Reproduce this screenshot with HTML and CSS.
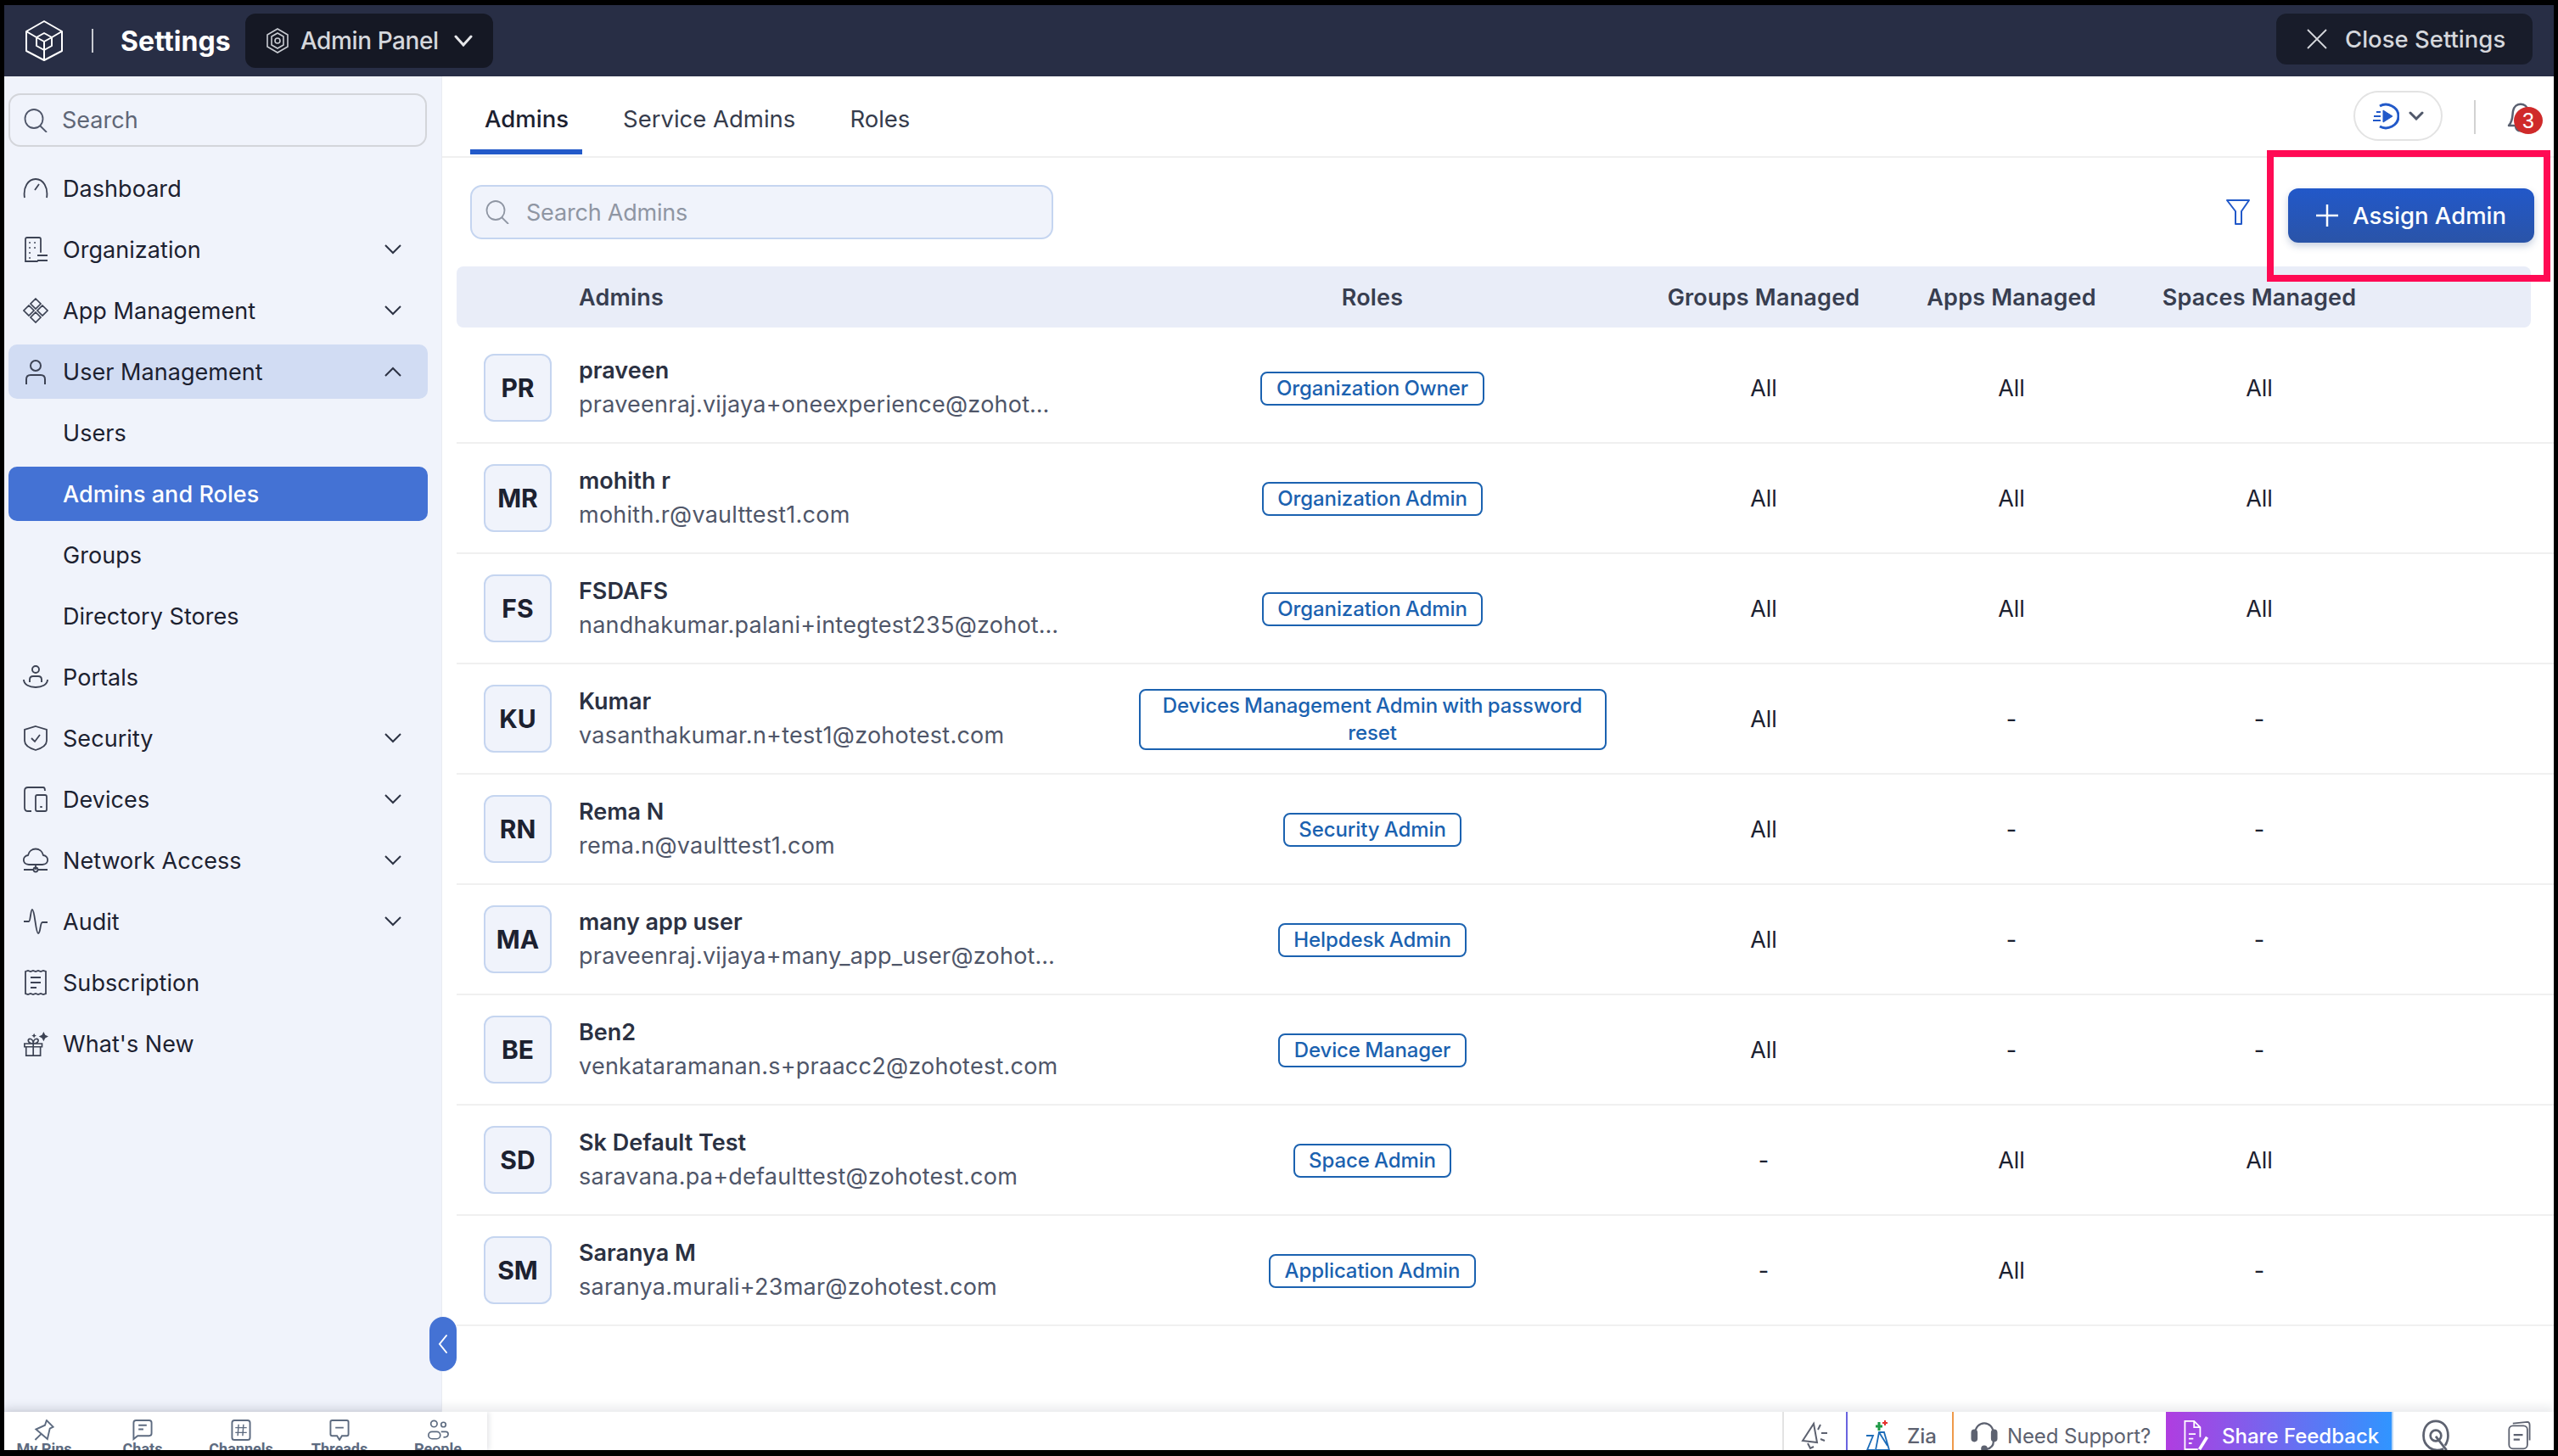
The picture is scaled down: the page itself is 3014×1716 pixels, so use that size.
FILE: index.html
```html
<!DOCTYPE html>
<html lang="en">
<head>
<meta charset="utf-8">
<title>Settings - Admins</title>
<link rel="stylesheet" href="styles.css">
</head>
<body>
<div class="app">
  <header class="topbar">
    <svg class="logo" viewBox="0 0 44 48" fill="none" stroke="#fff" stroke-width="2" stroke-linejoin="round"><path d="M22 1 43 13V36L22 47 1 36V13Z"/><path d="M22 15 31 20V30L22 35 13 30V20ZM13 20 22 25 31 20M22 25V47M1 13 13 20M43 13 31 20"/></svg>
    <span class="topbar-sep"></span>
    <span class="topbar-title">Settings</span>
    <div class="panel-btn">
      <svg class="panel-icon" viewBox="0 0 26 30" fill="none" stroke="#c9ccd3" stroke-width="1.6"><path d="M13 1 25 8V22L13 29 1 22V8Z"/><path d="M13 6 20 10V20L13 24 6 20V10Z"/><circle cx="13" cy="15" r="3"/></svg>
      <span>Admin Panel</span>
      <svg class="panel-chev" viewBox="0 0 22 14" fill="none" stroke="#e6e7ea" stroke-width="3" stroke-linecap="round"><path d="M2 2 11 12 20 2"/></svg>
    </div>
    <div class="close-btn">
      <svg class="close-icon" viewBox="0 0 24 24" fill="none" stroke="#d5d7dc" stroke-width="1.8"><path d="M1 1 23 23M23 1 1 23"/></svg>
      <span>Close Settings</span>
    </div>
  </header>

  <div class="middle">
    <aside class="sidebar">
      <div class="side-search">
        <svg class="search-icon" viewBox="0 0 28 28" fill="none" stroke="#4f5669" stroke-width="1.8"><ellipse cx="12" cy="12" rx="10.5" ry="11"/><path d="M19 20 27 28"/></svg>
        <span>Search</span>
      </div>
      <nav class="nav">
        <div class="nav-item">
          <svg class="nav-icon" viewBox="0 0 30 30" fill="none" stroke="#3d4354" stroke-width="1.8"><path d="M2 26C0 14 6 4 15 4s15 10 13 22M19 10 14 17"/></svg>
          <span class="nav-label">Dashboard</span>
        </div>
        <div class="nav-item">
          <svg class="nav-icon" viewBox="0 0 30 30" fill="none" stroke="#3d4354" stroke-width="1.8"><path d="M17 29H3V3Q3 1 5 1H19Q21 1 21 3V18M8 7h.1M14 7h.1M8 13h.1M14 13h.1M8 19h.1M8 25h.1" stroke-linecap="round"/><path d="M17 22H29M17 28H29" /></svg>
          <span class="nav-label">Organization</span>
          <svg class="nav-chev" viewBox="0 0 20 12" fill="none" stroke="#2d3344" stroke-width="2"><path d="M1 1 10 10 19 1"/></svg>
        </div>
        <div class="nav-item">
          <svg class="nav-icon" viewBox="0 0 30 30" fill="none" stroke="#3d4354" stroke-width="1.7"><path d="M15 1 21 7 15 13 9 7ZM15 17 21 23 15 29 9 23ZM7 9 13 15 7 21 1 15ZM23 9 29 15 23 21 17 15Z"/></svg>
          <span class="nav-label">App Management</span>
          <svg class="nav-chev" viewBox="0 0 20 12" fill="none" stroke="#2d3344" stroke-width="2"><path d="M1 1 10 10 19 1"/></svg>
        </div>
        <div class="nav-item nav-open">
          <svg class="nav-icon" viewBox="0 0 30 30" fill="none" stroke="#3d4354" stroke-width="2"><circle cx="15" cy="8" r="6"/><path d="M4 30V24Q4 19 9 19H21Q26 19 26 24V30"/></svg>
          <span class="nav-label">User Management</span>
          <svg class="nav-chev" viewBox="0 0 20 12" fill="none" stroke="#2d3344" stroke-width="2"><path d="M1 11 10 2 19 11"/></svg>
        </div>
        <div class="nav-item"><span class="nav-label nav-sub">Users</span></div>
        <div class="nav-item nav-active"><span class="nav-label nav-sub">Admins and Roles</span></div>
        <div class="nav-item"><span class="nav-label nav-sub">Groups</span></div>
        <div class="nav-item"><span class="nav-label nav-sub">Directory Stores</span></div>
        <div class="nav-item">
          <svg class="nav-icon" viewBox="0 0 30 30" fill="none" stroke="#3d4354" stroke-width="1.9"><circle cx="15" cy="6" r="4"/><path d="M8 21V18Q8 14 12 14H18Q22 14 22 18V21M1 18C1 30 29 30 29 18"/></svg>
          <span class="nav-label">Portals</span>
        </div>
        <div class="nav-item">
          <svg class="nav-icon" viewBox="0 0 30 30" fill="none" stroke="#3d4354" stroke-width="1.8"><path d="M15 1 28 5V18Q28 25 15 29 2 25 2 18V5Z"/><path d="M10 15 14 19 20 11"/></svg>
          <span class="nav-label">Security</span>
          <svg class="nav-chev" viewBox="0 0 20 12" fill="none" stroke="#2d3344" stroke-width="2"><path d="M1 1 10 10 19 1"/></svg>
        </div>
        <div class="nav-item">
          <svg class="nav-icon" viewBox="0 0 30 30" fill="none" stroke="#3d4354" stroke-width="1.8"><path d="M10 29H6Q2 29 2 25V5Q2 1 6 1H24Q26 1 26 5"/><rect x="15" y="10" width="13" height="19" rx="2"/><path d="M21 24h1" stroke-linecap="round"/></svg>
          <span class="nav-label">Devices</span>
          <svg class="nav-chev" viewBox="0 0 20 12" fill="none" stroke="#2d3344" stroke-width="2"><path d="M1 1 10 10 19 1"/></svg>
        </div>
        <div class="nav-item">
          <svg class="nav-icon" viewBox="0 0 30 30" fill="none" stroke="#3d4354" stroke-width="1.8"><path d="M8 20H7C-1 20-1 10 6 9 8-1 22-1 24 9 31 10 31 20 23 20Z"/><path d="M15 20V26M1 26H12M18 26H29"/><circle cx="15" cy="26" r="2.5"/></svg>
          <span class="nav-label">Network Access</span>
          <svg class="nav-chev" viewBox="0 0 20 12" fill="none" stroke="#2d3344" stroke-width="2"><path d="M1 1 10 10 19 1"/></svg>
        </div>
        <div class="nav-item">
          <svg class="nav-icon" viewBox="0 0 30 30" fill="none" stroke="#3d4354" stroke-width="1.8"><path d="M1 15H7C9 15 9 1 11 1 14 1 15 29 18 29 21 29 20 16 23 16H29"/></svg>
          <span class="nav-label">Audit</span>
          <svg class="nav-chev" viewBox="0 0 20 12" fill="none" stroke="#2d3344" stroke-width="2"><path d="M1 1 10 10 19 1"/></svg>
        </div>
        <div class="nav-item">
          <svg class="nav-icon" viewBox="0 0 30 30" fill="none" stroke="#3d4354" stroke-width="1.8"><path d="M3 2 6 1 9 2 12 1 15 2 18 1 21 2 24 1 27 2V28L24 29 21 28 18 29 15 28 12 29 9 28 6 29 3 28ZM9 9H21M9 15H21M9 21H16"/></svg>
          <span class="nav-label">Subscription</span>
        </div>
        <div class="nav-item">
          <svg class="nav-icon" viewBox="0 0 32 32" fill="none" stroke="#3d4354" stroke-width="1.8"><path d="M2 16H24V20H2ZM4 20V31H22V20M13 16V31M13 16C6 16 5 10 9 10 12 10 13 14 13 16 13 14 14 10 17 10 21 10 20 16 13 16Z"/><path d="M26 1 28 5 32 7 28 9 26 13 24 9 20 7 24 5Z" fill="#3d4354" stroke="none"/><path d="M14 3 15 5 17 6 15 7 14 9 13 7 11 6 13 5Z" fill="#3d4354" stroke="none"/></svg>
          <span class="nav-label">What's New</span>
        </div>
      </nav>
    </aside>

    <main class="main">
      <button class="collapse" type="button" aria-label="Collapse">
        <svg viewBox="0 0 12 24" fill="none" stroke="#fff" stroke-width="2" stroke-linecap="round"><path d="M10 2 2 12 10 22"/></svg>
      </button>

      <div class="tabbar">
        <div class="tab tab-active">Admins</div>
        <div class="tab">Service Admins</div>
        <div class="tab">Roles</div>
        <div class="tabbar-tools">
          <div class="play-pill">
            <svg class="play-icon" viewBox="0 0 32 32" fill="none" stroke="#2259c9" stroke-width="3"><path d="M9 4C18-1 31 5 31 16S18 33 9 28"/><path d="M13 9 24 16 13 23Z" fill="#2259c9" stroke-width="1"/><path d="M5 11H10M2 16H10M1 21H10" stroke-width="2"/></svg>
            <svg class="play-chev" viewBox="0 0 18 11" fill="none" stroke="#50586a" stroke-width="3" stroke-linecap="round"><path d="M2 2 9 9 16 2"/></svg>
          </div>
          <span class="tools-sep"></span>
          <div class="bell">
            <svg class="bell-icon" viewBox="0 0 32 38" fill="none" stroke="#5a6070" stroke-width="2.5" stroke-linejoin="round"><path d="M2 29C7 24 6 18 7 12 9 1 23 1 25 12 26 18 25 24 30 29ZM10 30C11 37 21 37 22 30"/></svg>
            <span class="badge">3</span>
          </div>
        </div>
      </div>

      <div class="toolbar">
        <div class="admin-search">
          <svg class="search-icon search-muted" viewBox="0 0 28 28" fill="none" stroke="#8f96a3" stroke-width="1.8"><ellipse cx="12" cy="12" rx="10.5" ry="11"/><path d="M19 20 27 28"/></svg>
          <span>Search Admins</span>
        </div>
        <svg class="filter" viewBox="0 0 28 32" fill="none" stroke="#2259c9" stroke-width="2" stroke-linejoin="round"><path d="M1 2H27L18 15V30H11V15Z"/></svg>
        <div class="assign-wrap">
          <button class="assign" type="button">
            <svg class="plus" viewBox="0 0 26 26" fill="none" stroke="#fff" stroke-width="2.5"><path d="M13 0V26M0 13H26"/></svg>
            <span>Assign Admin</span>
          </button>
          <div class="highlight"></div>
        </div>
      </div>

      <div class="table-head">
        <div class="th th-admin">Admins</div>
        <div class="th">Roles</div>
        <div class="th">Groups Managed</div>
        <div class="th">Apps Managed</div>
        <div class="th">Spaces Managed</div>
      </div>

      <div class="rows">
        <div class="row">
          <div class="avatar">PR</div>
          <div class="who"><div class="name">praveen</div><div class="email">praveenraj.vijaya+oneexperience@zohotest.com</div></div>
          <div class="cell"><span class="tag">Organization Owner</span></div>
          <div class="cell">All</div><div class="cell">All</div><div class="cell">All</div>
        </div>
        <div class="row">
          <div class="avatar">MR</div>
          <div class="who"><div class="name">mohith r</div><div class="email">mohith.r@vaulttest1.com</div></div>
          <div class="cell"><span class="tag">Organization Admin</span></div>
          <div class="cell">All</div><div class="cell">All</div><div class="cell">All</div>
        </div>
        <div class="row">
          <div class="avatar">FS</div>
          <div class="who"><div class="name">FSDAFS</div><div class="email">nandhakumar.palani+integtest235@zohotest.com</div></div>
          <div class="cell"><span class="tag">Organization Admin</span></div>
          <div class="cell">All</div><div class="cell">All</div><div class="cell">All</div>
        </div>
        <div class="row">
          <div class="avatar">KU</div>
          <div class="who"><div class="name">Kumar</div><div class="email">vasanthakumar.n+test1@zohotest.com</div></div>
          <div class="cell"><span class="tag">Devices Management Admin with password reset</span></div>
          <div class="cell">All</div><div class="cell">-</div><div class="cell">-</div>
        </div>
        <div class="row">
          <div class="avatar">RN</div>
          <div class="who"><div class="name">Rema N</div><div class="email">rema.n@vaulttest1.com</div></div>
          <div class="cell"><span class="tag">Security Admin</span></div>
          <div class="cell">All</div><div class="cell">-</div><div class="cell">-</div>
        </div>
        <div class="row">
          <div class="avatar">MA</div>
          <div class="who"><div class="name">many app user</div><div class="email">praveenraj.vijaya+many_app_user@zohotest.com</div></div>
          <div class="cell"><span class="tag">Helpdesk Admin</span></div>
          <div class="cell">All</div><div class="cell">-</div><div class="cell">-</div>
        </div>
        <div class="row">
          <div class="avatar">BE</div>
          <div class="who"><div class="name">Ben2</div><div class="email">venkataramanan.s+praacc2@zohotest.com</div></div>
          <div class="cell"><span class="tag">Device Manager</span></div>
          <div class="cell">All</div><div class="cell">-</div><div class="cell">-</div>
        </div>
        <div class="row">
          <div class="avatar">SD</div>
          <div class="who"><div class="name">Sk Default Test</div><div class="email">saravana.pa+defaulttest@zohotest.com</div></div>
          <div class="cell"><span class="tag">Space Admin</span></div>
          <div class="cell">-</div><div class="cell">All</div><div class="cell">All</div>
        </div>
        <div class="row">
          <div class="avatar">SM</div>
          <div class="who"><div class="name">Saranya M</div><div class="email">saranya.murali+23mar@zohotest.com</div></div>
          <div class="cell"><span class="tag">Application Admin</span></div>
          <div class="cell">-</div><div class="cell">All</div><div class="cell">-</div>
        </div>
      </div>
    </main>
  </div>

  <footer class="bottombar">
    <div class="quick">
      <div class="quick-item">
        <svg class="quick-icon" viewBox="0 0 24 26" fill="none" stroke="#5d6b80" stroke-width="2"><path d="M15 1 23 9 19 11 16 24 2 12 13 7ZM8 18 1 25"/></svg>
        <span>My Pins</span>
      </div>
      <div class="quick-item">
        <svg class="quick-icon" viewBox="0 0 24 26" fill="none" stroke="#5d6b80" stroke-width="2"><path d="M1 24V4Q1 1 4 1H20Q23 1 23 4V17Q23 20 20 20H6ZM7 7H17M7 12H13"/></svg>
        <span>Chats</span>
      </div>
      <div class="quick-item">
        <svg class="quick-icon" viewBox="0 0 24 26" fill="none" stroke="#5d6b80" stroke-width="2"><rect x="1" y="1" width="22" height="24" rx="3"/><path d="M9 6 8 20M15 6 14 20M5 10H19M5 16H19" stroke-width="1.5"/></svg>
        <span>Channels</span>
      </div>
      <div class="quick-item">
        <svg class="quick-icon" viewBox="0 0 24 26" fill="none" stroke="#5d6b80" stroke-width="2"><path d="M3 1H21Q23 1 23 3V18Q23 20 21 20H15L12 25 9 20H3Q1 20 1 18V3Q1 1 3 1ZM7 10H17"/></svg>
        <span>Threads</span>
      </div>
      <div class="quick-item">
        <svg class="quick-icon" viewBox="0 0 28 26" fill="none" stroke="#5d6b80" stroke-width="1.8"><circle cx="9" cy="5" r="4"/><circle cx="21" cy="6" r="3"/><rect x="2" y="15" width="15" height="9" rx="4.5"/><path d="M18 15H24Q27 15 27 18 27 22 21 22"/></svg>
        <span>People</span>
      </div>
    </div>
    <div class="utils">
      <div class="util util-mega">
        <svg class="util-icon" viewBox="0 0 34 36" fill="none" stroke="#5d6270" stroke-width="2"><path d="M2 24 15 4 19 26ZM8 27 11 33 15 31M23 5 20 11M24 15H31M23 22 28 24"/></svg>
      </div>
      <div class="util util-zia">
        <svg class="util-icon" viewBox="0 0 30 36" fill="none" stroke="#1c6cb8" stroke-width="1.8"><path d="M1 18H9L2 35H11M16 14 12 35H28L22 14ZM16 14 26 30"/><path d="M16 2V12M12 7H20" stroke="#1f9a46" stroke-width="3"/><path d="M23 0V6M20 3H26" stroke="#e5322d" stroke-width="2"/></svg>
        <span class="util-text util-strong">Zia</span>
      </div>
      <div class="util util-help">
        <svg class="util-icon" viewBox="0 0 34 40" fill="none" stroke="#5d6270" stroke-width="2.5"><path d="M5 18C5-1 29-1 29 18V28Q29 36 19 38"/><rect x="1" y="13" width="6" height="14" rx="3" fill="#5d6270"/><rect x="27" y="13" width="6" height="14" rx="3" fill="#5d6270"/><circle cx="17" cy="37" r="3" fill="#5d6270"/></svg>
        <span class="util-text">Need Support?</span>
      </div>
      <div class="util-feedback">
        <svg class="util-icon" viewBox="0 0 34 40" fill="none" stroke="#fff" stroke-width="2"><path d="M20 38H3V1H15L23 9V22M15 1V9H23M8 18H17M8 24H14M8 30H12"/><path d="M22 38 32 22" stroke-width="4"/></svg>
        <span>Share Feedback</span>
      </div>
      <div class="util-end">
        <svg class="util-q" viewBox="0 0 36 42" fill="none" stroke="#5d6270" stroke-width="3"><path d="M28 38C14 44 2 34 2 21 2 9 9 2 18 2S34 9 34 21C34 27 32 31 30 34"/><circle cx="18" cy="21" r="7"/><path d="M18 22 32 40"/></svg>
        <svg class="util-notes" viewBox="0 0 30 40" fill="none" stroke="#5d6270" stroke-width="2"><path d="M7 4 26 2Q29 2 29 6V26"/><rect x="2" y="7" width="24" height="30" rx="5"/><path d="M8 19H20M8 25H16" stroke-width="2.5"/></svg>
      </div>
    </div>
  </footer>
</div>
</body>
</html>
```

FILE: styles.css
```css
* { box-sizing: border-box; }
html, body { margin: 0; height: 100%; }
body {
  background: #000;
  padding: 6px 5px 7px 5px;
  font-family: Inter, "Noto Sans", sans-serif;
  font-size: 27px;
  color: #1c2130;
  overflow: hidden;
}
.app { height: 100%; display: flex; flex-direction: column; background: #fff; overflow: hidden; }

/* top bar */
.topbar { flex: 0 0 84px; background: #282e45; display: flex; align-items: center; padding: 0 25px; position: relative; }
.logo { width: 44px; height: 48px; }
.topbar-sep { width: 2px; height: 28px; background: #c8cad1; margin-left: 34px; }
.topbar-title { margin-left: 32px; font-size: 32px; font-weight: 700; color: #fff; letter-spacing: .1px; }
.panel-btn { margin-left: 17px; width: 292px; height: 64px; margin-top: 10px; margin-bottom: 10px; background: #151824; border-radius: 12px; display: flex; align-items: center; padding-left: 25px; color: #d5d7dc; font-size: 28px; letter-spacing: -.4px; font-weight: 500; }
.panel-icon { width: 26px; height: 30px; margin-right: 14px; }
.panel-chev { width: 22px; height: 14px; margin-left: 18px; }
.close-btn { margin-left: auto; margin-top: 10px; margin-bottom: 14px; width: 302px; height: 60px; background: #181c2a; border-radius: 12px; display: flex; align-items: center; padding-left: 36px; color: #d5d7dc; font-size: 27.5px; font-weight: 500; }
.close-icon { width: 24px; height: 24px; margin-right: 21px; }

/* middle */
.middle { flex: 1; display: flex; min-height: 0; position: relative; }
.sidebar { flex: 0 0 516px; background: #f0f3fb; padding: 20px 0 0 5px; box-shadow: inset -1px 0 0 #e9ebf1, inset 0 -8px 8px -8px #d3d6df; }
.side-search { width: 493px; height: 63px; border: 2px solid #d3d5da; border-radius: 14px; display: flex; align-items: center; padding-left: 16px; color: #5f6676; }
.search-icon { width: 28px; height: 28px; margin-right: 17px; }
.nav { margin-top: 17px; display: flex; flex-direction: column; gap: 8px; }
.nav-item { width: 494px; height: 64px; border-radius: 10px; display: flex; align-items: center; padding-left: 17px; position: relative; }
.nav-icon { width: 30px; height: 30px; flex: none; margin-right: 17px; }
.nav-label { font-size: 27px; letter-spacing: .05px; }
.nav-sub { margin-left: 47px; }
.nav-chev { width: 20px; height: 12px; margin-left: auto; margin-right: 31px; }
.nav-open { background: #d1dcf3; }
.nav-active { background: #4472d4; color: #fff; font-weight: 500; }

/* main */
.main { flex: 1; min-width: 0; position: relative; }
.collapse { position: absolute; left: -15px; top: 1462px; width: 32px; height: 64px; border: 0; border-radius: 16px; background: #4472d4; padding: 0; display: flex; align-items: center; justify-content: center; z-index: 2; }
.collapse svg { width: 12px; height: 24px; }

.tabbar { height: 96px; border-bottom: 2px solid #f0f0f0; display: flex; padding-left: 33px; padding-right: 11px; }
.tab { height: 92px; padding: 8px 17px 0; margin-right: 30px; display: flex; align-items: center; font-size: 27.5px; color: #363c4c; }
.tab-active { color: #1c2130; font-weight: 500; border-bottom: 6px solid #2259c9; padding-top: 14px; padding-right: 16px; padding-left: 17px; margin-right: 31px; }
.tabbar-tools { margin-left: auto; display: flex; align-items: flex-start; }
.play-pill { margin-top: 17px; width: 105px; height: 59px; border: 2px solid #e3e3e3; border-radius: 30px; display: flex; align-items: center; padding-left: 20px; }
.play-icon { width: 32px; height: 32px; }
.play-chev { width: 18px; height: 11px; margin-left: 11px; }
.tools-sep { width: 2px; height: 40px; margin-top: 28px; margin-left: 37px; background: #d2d2d2; }
.bell { position: relative; margin-left: 37px; margin-top: 29px; width: 44px; height: 40px; }
.bell-icon { width: 32px; height: 38px; display: block; }
.badge { position: absolute; left: 8px; top: 7px; width: 34px; height: 32px; border-radius: 50%; background: #cf2a2a; color: #fff; font-size: 25px; line-height: 32px; text-align: center; font-family: "Liberation Sans", sans-serif; }

.toolbar { height: 128px; display: flex; align-items: flex-start; padding-left: 33px; padding-right: 23px; }
.admin-search { margin-top: 32px; width: 687px; height: 64px; border: 2px solid #c5d5f0; border-radius: 14px; background: #f0f3fb; display: flex; align-items: center; padding-left: 16px; color: #8f96a3; letter-spacing: -.2px; }
.search-muted { margin-right: 20px; }
.filter { width: 28px; height: 32px; margin-left: auto; margin-top: 48px; }
.assign-wrap { position: relative; margin-left: 45px; margin-top: 36px; }
.assign { width: 290px; height: 64px; border: 0; border-radius: 12px; background: linear-gradient(#2258c9, #2a54a8); box-shadow: 0 4px 8px rgba(40, 70, 130, .25); color: #fff; font: inherit; font-size: 27.5px; font-weight: 500; display: flex; align-items: center; padding: 0 0 0 33px; }
.plus { width: 26px; height: 26px; margin-right: 17px; }
.highlight { position: absolute; left: -25px; right: -19px; top: -45px; bottom: -46px; border: 8px solid #ff0a54; pointer-events: none; }

.table-head { margin: 0 27px 0 17px; height: 72px; background: #e9edf8; border-radius: 8px; display: grid; grid-template-columns: 764px 630px 292px 292px 292px; align-items: center; font-weight: 600; color: #383e50; font-size: 27px; letter-spacing: .2px; }
.th { text-align: center; }
.th-admin { text-align: left; padding-left: 144px; }

.rows { margin: 7px 0 0 17px; }
.row { height: 130px; border-bottom: 2px solid #f0f0f0; display: grid; grid-template-columns: 32px 80px 32px 620px 630px 292px 292px 292px; align-items: center; }
.avatar { grid-column: 2; width: 80px; height: 80px; border: 2px solid #c5d5f0; border-radius: 12px; background: #f0f3fb; display: flex; align-items: center; justify-content: center; font-weight: 700; font-size: 30px; color: #1c2130; }
.who { grid-column: 4; min-width: 0; padding-top: 2px; }
.name { font-weight: 600; color: #2b3142; font-size: 27px; line-height: 38px; }
.email { color: #4f5669; font-size: 27px; letter-spacing: .25px; line-height: 42px; max-width: 567px; white-space: nowrap; overflow: hidden; text-overflow: ellipsis; }
.cell { text-align: center; color: #1c2130; font-size: 27px; }
.tag { display: inline-block; max-width: 551px; padding: 2px 16.5px; margin-top: 2px; border: 2px solid #1b62b0; border-radius: 8px; color: #1b62b0; font-size: 24px; font-weight: 500; letter-spacing: -.1px; word-spacing: -1px; line-height: 32px; vertical-align: middle; }

/* bottom bar */
.bottombar { flex: 0 0 45px; display: flex; justify-content: space-between; background: #fff; overflow: hidden; position: relative; box-shadow: 0 -6px 10px rgba(60, 65, 90, .1); }
.quick { width: 569px; display: flex; box-shadow: 2px 0 6px rgba(60, 65, 90, .15); }
.quick-item { flex: 0 0 116px; display: flex; flex-direction: column; align-items: center; padding-top: 9px; font-family: Roboto, sans-serif; font-weight: 700; font-size: 18px; line-height: 20px; color: #5d6b80; }
.quick-item:first-child { margin-left: -11px; }
.quick-icon { height: 25px; width: 26px; flex: none; }
.utils { display: flex; align-items: flex-start; }
.util { display: flex; align-items: center; height: 56px; border-left: 2px solid #e3e3e3; }
.util-icon { height: 36px; width: 34px; flex: none; }
.util-mega { width: 75px; padding-left: 20px; }
.util-zia { width: 125px; border-left-color: #6a64e0; padding-left: 19px; }
.util-help { width: 252px; border-left-color: #ef9a4a; padding-left: 19px; }
.util-text { color: #5d6270; font-size: 24px; margin-left: 10px; letter-spacing: -.1px; white-space: nowrap; }
.util-strong { margin-left: 17px; font-weight: 500; }
.util-feedback { width: 266px; height: 56px; display: flex; align-items: center; padding-left: 18px; background: linear-gradient(90deg, #b03de0, #3095ff); color: #fff; font-size: 24px; font-weight: 500; white-space: nowrap; }
.util-feedback span { margin-left: 14px; }
.util-end { width: 191px; height: 56px; display: flex; align-items: center; padding-left: 32px; border-left: 2px solid #bcd7f5; }
.util-q { width: 36px; height: 38px; }
.util-notes { width: 30px; height: 36px; margin-left: 65px; }
```
